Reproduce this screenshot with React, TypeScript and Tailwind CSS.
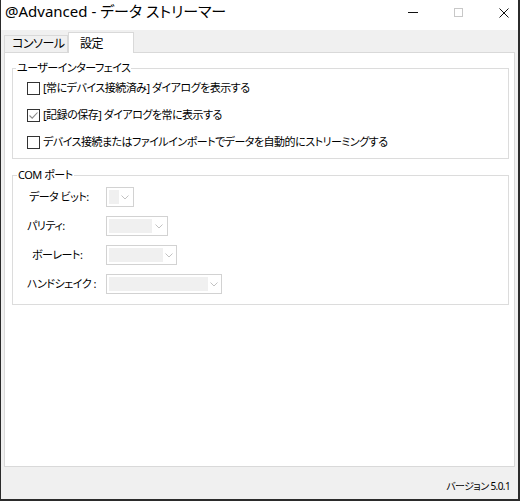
import React from 'react';

const FONT = "font-['Noto_Sans','Noto_Sans_CJK_JP',sans-serif] [font-feature-settings:'palt']";
const UI_TEXT = 'whitespace-nowrap text-[11px] tracking-[-0.5px] text-black';

function CheckBox({ checked, label }: { checked?: boolean; label: string }) {
  return (
    <div className="flex h-[18px] items-center gap-[3px]">
      <div className="flex h-[13px] w-[13px] shrink-0 items-center justify-center border border-[#333333] bg-white">
        {checked && (
          <svg width="11" height="11" viewBox="0 0 11 11">
            <polyline points="1.5,5.5 4.2,8.2 9.5,2.5" fill="none" stroke="#8a8a8a" strokeWidth="1.1" />
          </svg>
        )}
      </div>
      <span className={`${UI_TEXT} leading-[18px]`}>{label}</span>
    </div>
  );
}

function Combo({ width, fill }: { width: number; fill: number }) {
  return (
    <div className="flex h-[20px] border border-[#d2d2d2] bg-white p-[2px]" style={{ width }}>
      <div className="bg-[#f0f0f0]" style={{ width: fill }} />
      <div className="flex flex-1 items-center justify-center">
        <svg width="8" height="5" viewBox="0 0 8 5">
          <polyline points="0.5,0.5 4,4 7.5,0.5" fill="none" stroke="#c2c2c2" strokeWidth="1" />
        </svg>
      </div>
    </div>
  );
}

function ComRow({ label, pad, width, fill }: { label: string; pad: number; width: number; fill: number }) {
  return (
    <div className="flex h-[20px] items-center">
      <div className={`w-[93px] shrink-0 ${UI_TEXT} leading-[18px]`} style={{ paddingLeft: pad }}>
        {label}
      </div>
      <Combo width={width} fill={fill} />
    </div>
  );
}

export default function App() {
  return (
    <div className={`flex h-[501px] w-[520px] flex-col border-b-2 border-l border-r-2 border-[#2b2b2b] bg-[#f0f0f0] ${FONT}`}>
      {/* title bar */}
      <div className="flex h-[30px] shrink-0 items-start justify-between bg-white">
        <div className="pl-[4px] pt-[1px] text-[15px] leading-[20px] text-black">@Advanced - データ ストリーマー</div>
        <div className="flex items-start gap-[36px] pr-[9px] pt-[8px]">
          <svg width="10" height="10" viewBox="0 0 10 10">
            <line x1="0" y1="4.5" x2="10" y2="4.5" stroke="#111" strokeWidth="1" />
          </svg>
          <svg width="9" height="9" viewBox="0 0 9 9">
            <rect x="0.5" y="0.5" width="8" height="8" fill="none" stroke="#c8c8c8" strokeWidth="1" />
          </svg>
          <svg width="10" height="10" viewBox="0 0 10 10">
            <line x1="0.5" y1="0.5" x2="9.5" y2="9.5" stroke="#111" strokeWidth="1" />
            <line x1="9.5" y1="0.5" x2="0.5" y2="9.5" stroke="#111" strokeWidth="1" />
          </svg>
        </div>
      </div>

      {/* tabs */}
      <div className="flex h-[22px] shrink-0 items-end pl-[3px]">
        <div className="flex h-[17px] w-[64px] items-center whitespace-nowrap border border-b-0 border-[#d9d9d9] bg-[#f0f0f0] pl-[7px] text-[12px] leading-[16px] tracking-[-0.5px] text-black">
          コンソール
        </div>
        <div className="relative z-10 mb-[-1px] flex h-[21px] w-[66px] items-center whitespace-nowrap border border-b-0 border-[#d9d9d9] bg-white pl-[11px] pt-[2px] text-[12px] leading-[16px] tracking-[-0.5px] text-black">
          設定
        </div>
      </div>

      {/* tab page */}
      <div className="mx-[3px] h-[415px] shrink-0 border border-[#d9d9d9] bg-white pt-[8px]">
        <fieldset className="ml-[7px] w-[497px] border border-[#dcdcdc] px-[14px] pb-[7px] pt-[4px]">
          <legend className={`ml-[-11px] px-[1px] ${UI_TEXT} leading-[14px]`}>ユーザーインターフェイス</legend>
          <div className="flex flex-col gap-[9px]">
            <CheckBox label="[常にデバイス接続済み] ダイアログを表示する" />
            <CheckBox checked label="[記録の保存] ダイアログを常に表示する" />
            <CheckBox label="デバイス接続またはファイルインポートでデータを自動的にストリーミングする" />
          </div>
        </fieldset>

        <fieldset className="ml-[7px] mt-[9px] w-[497px] border border-[#dcdcdc] pb-[10px] pt-[5px]">
          <legend className={`ml-[4px] px-[1px] ${UI_TEXT} leading-[14px]`}>COM ポート</legend>
          <div className="flex flex-col gap-[9px]">
            <ComRow label="データ ビット:" pad={16} width={28} fill={10} />
            <ComRow label="パリティ:" pad={14} width={62} fill={43} />
            <ComRow label="ボーレート:" pad={19} width={71} fill={54} />
            <ComRow label="ハンドシェイク :" pad={14} width={116} fill={99} />
          </div>
        </fieldset>
      </div>

      {/* status */}
      <div className="flex flex-1 items-start justify-end pr-[8px] pt-[12px] text-[10px] leading-[14px] tracking-[-0.6px] text-black">
        バージョン 5.0.1
      </div>
    </div>
  );
}
